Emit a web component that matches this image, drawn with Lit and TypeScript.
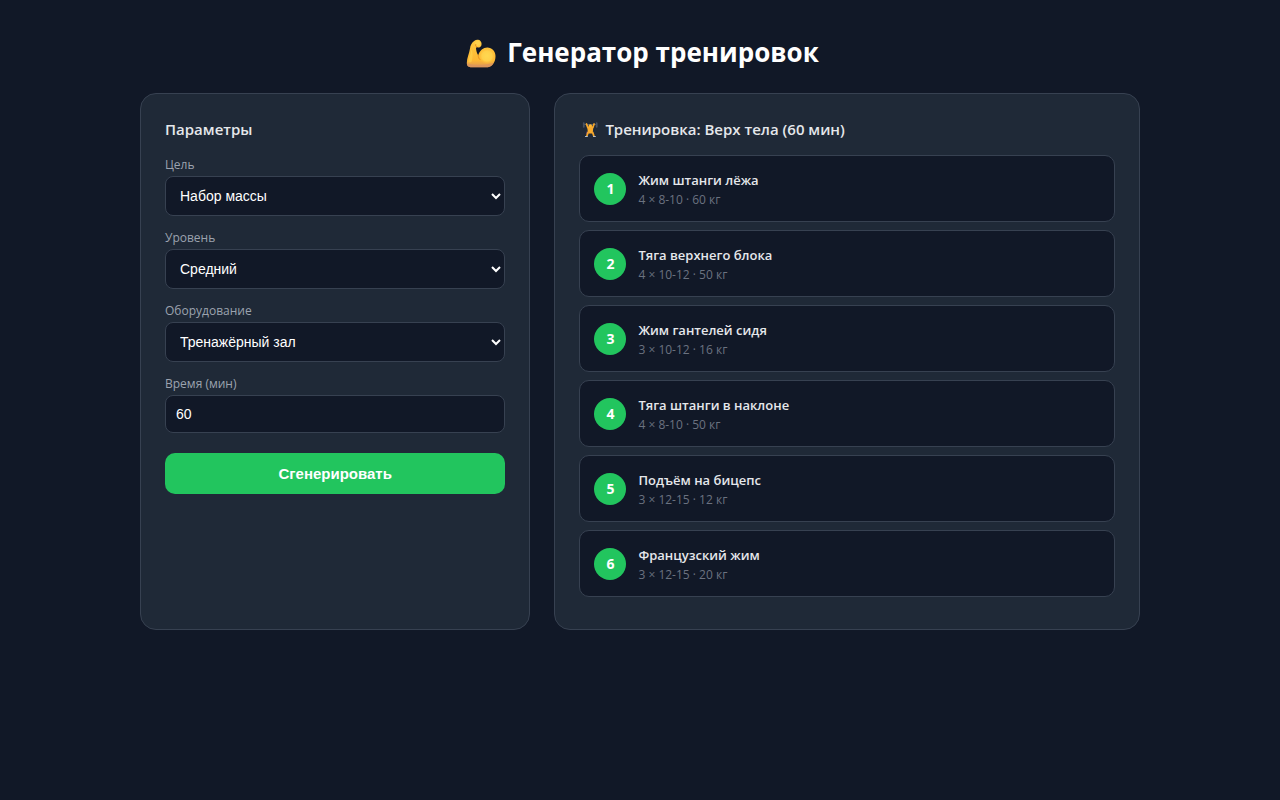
import { LitElement, html, css } from "lit";
import { customElement, state } from "lit/decorators.js";

interface Exercise {
  name: string;
  sets: number;
  reps: string;
  weight: number;
}

const EXERCISES: Exercise[] = [
  { name: "Жим штанги лёжа", sets: 4, reps: "8-10", weight: 60 },
  { name: "Тяга верхнего блока", sets: 4, reps: "10-12", weight: 50 },
  { name: "Жим гантелей сидя", sets: 3, reps: "10-12", weight: 16 },
  { name: "Тяга штанги в наклоне", sets: 4, reps: "8-10", weight: 50 },
  { name: "Подъём на бицепс", sets: 3, reps: "12-15", weight: 12 },
  { name: "Французский жим", sets: 3, reps: "12-15", weight: 20 },
];

@customElement("app-root")
export class AppRoot extends LitElement {
  @state() private minutes = 60;

  static styles = css`
    :host {
      display: block;
      box-sizing: border-box;
      min-height: 100vh;
      padding: 32px;
      background: #111827;
      color: #e5e7eb;
      font-family: "Open Sans", "Noto Sans", sans-serif;
    }
    * {
      box-sizing: border-box;
    }
    .page {
      max-width: 1000px;
      margin: 0 auto;
    }
    .title {
      display: flex;
      justify-content: center;
      align-items: center;
      gap: 8px;
      margin: 0 0 20px;
      font-size: 26px;
      line-height: 41px;
      font-weight: 700;
      color: #fff;
    }
    .arm {
      width: 38px;
      height: 32px;
      flex: none;
    }
    .columns {
      display: grid;
      grid-template-columns: 1fr 1.5fr;
      gap: 24px;
    }
    .card {
      padding: 24px;
      background: #1f2937;
      border: 1px solid #374151;
      border-radius: 16px;
    }
    .heading {
      display: flex;
      align-items: center;
      gap: 4px;
      margin: 0 0 14px;
      font-size: 15px;
      line-height: 23px;
      font-weight: 600;
    }
    .lifter {
      width: 22px;
      height: 18px;
      flex: none;
    }
    .label {
      display: block;
      margin-bottom: 2px;
      font-size: 12px;
      line-height: 19px;
      color: #9ca3af;
    }
    .field {
      display: block;
      width: 100%;
      height: 40px;
      margin: 0 0 12px;
      padding: 10px;
      background: #111827;
      border: 1px solid #374151;
      border-radius: 8px;
      color: #fff;
      font-family: "Liberation Sans", Arial, sans-serif;
      font-size: 14px;
    }
    .number {
      height: 38px;
    }
    .submit {
      display: block;
      width: 100%;
      margin: 20px 0 0;
      padding: 12px;
      border: 0;
      border-radius: 10px;
      background: #22c55e;
      color: #fff;
      font-family: "Liberation Sans", Arial, sans-serif;
      font-size: 15px;
      line-height: 17px;
      font-weight: 700;
      cursor: pointer;
    }
    .list {
      margin: 0;
      padding: 0;
      list-style: none;
    }
    .item {
      display: flex;
      align-items: center;
      gap: 12px;
      margin-bottom: 8px;
      padding: 13px 14px;
      background: #111827;
      border: 1px solid #374151;
      border-radius: 10px;
    }
    .badge {
      display: flex;
      align-items: center;
      justify-content: center;
      flex: none;
      width: 32px;
      height: 32px;
      border-radius: 50%;
      background: #22c55e;
      color: #fff;
      font-size: 14px;
      font-weight: 700;
    }
    .name {
      font-size: 13px;
      line-height: 23px;
      font-weight: 600;
    }
    .meta {
      font-size: 12px;
      line-height: 16px;
      color: #6b7280;
    }
  `;

  private onMinutes(e: Event) {
    this.minutes = Number((e.target as HTMLInputElement).value);
  }

  render() {
    return html`
      <main class="page">
        <h1 class="title">
          <svg class="arm" viewBox="-1 1 38 32" aria-hidden="true">
            <defs>
              <linearGradient id="skin" x1="0" y1="0" x2="0" y2="1">
                <stop offset="0" stop-color="#ffcb40" />
                <stop offset="0.75" stop-color="#fdb833" />
                <stop offset="1" stop-color="#dd9758" />
              </linearGradient>
              <radialGradient id="muscle">
                <stop offset="0" stop-color="#ffd850" />
                <stop offset="0.6" stop-color="#ffd04a" />
                <stop offset="1" stop-color="#fdb833" stop-opacity="0" />
              </radialGradient>
            </defs>
            <path fill="url(#skin)" d="M12.500 4.700C14 3.500 17 3.500 18.400 4.900c1.500 1.500 1.500 4 .5 5.300-1 1.300-2.700 1.600-4 .9l-.9.900c.1 3 1 5.300 2.200 7.200 1.500-4.700 5.100-7.700 9.100-7.700 4.700 0 8.200 3.800 8.200 8.600 0 6-3 10.500-7.500 11.100H8.500C6 31 4.800 29.500 4.800 27c.1-5.500 2.400-9 3.200-14.500.3-3 1.700-6 4.500-7.800z" />
            <ellipse cx="25" cy="20" rx="8.500" ry="8.300" fill="url(#muscle)" />
            <circle cx="15.700" cy="7.300" r="2.500" fill="#ffd650" opacity=".8" />
            <path fill="#ffd650" opacity=".6" d="M9.500 13.500c1.500 3 1.500 8 0 12.500-1.500.8-2.800.4-3-.5.600-4 2.300-7.500 3-12z" />
            <path fill="none" stroke="#e8921e" stroke-width="1" stroke-linecap="round" d="M16.200 19.200c0 2 .6 3.400 1.800 4.400M14.900 11.100c-1.200-.5-1.600-1.600-1.200-2.600" />
            <path fill="#d9935c" opacity=".8" d="M4.900 27.500c6 1.700 17 2 26.600-.5-1.200 2.500-3 3.800-5.700 4.200H8.500C6.200 31 5 29.800 4.900 27.500z" />
          </svg>
          <span>Генератор тренировок</span>
        </h1>
        <div class="columns">
          <section class="card">
            <h2 class="heading">Параметры</h2>
            <label class="label" for="goal">Цель</label>
            <select class="field" id="goal">
              <option>Набор массы</option>
              <option>Похудение</option>
              <option>Выносливость</option>
            </select>
            <label class="label" for="level">Уровень</label>
            <select class="field" id="level">
              <option>Начинающий</option>
              <option selected>Средний</option>
              <option>Продвинутый</option>
            </select>
            <label class="label" for="gear">Оборудование</label>
            <select class="field" id="gear">
              <option>Тренажёрный зал</option>
              <option>Гантели</option>
              <option>Без оборудования</option>
            </select>
            <label class="label" for="time">Время (мин)</label>
            <input class="field number" id="time" type="number" .value=${String(this.minutes)} @change=${this.onMinutes} />
            <button class="submit" type="button">Сгенерировать</button>
          </section>
          <section class="card">
            <h2 class="heading">
              <svg class="lifter" viewBox="0 0 22 18" aria-hidden="true">
                <path stroke="#5b6472" stroke-width=".8" d="M5 3.500h13" />
                <path stroke="#465162" stroke-width="1.800" stroke-linecap="round" d="M4.800 2.200v3.600M17.700 2.200v3.600" />
                <path fill="none" stroke="#f5a62c" stroke-width="1.800" stroke-linecap="round" stroke-linejoin="round" d="M7.500 3l1.300 3.500h5l1.300-3.500" />
                <circle cx="11.300" cy="5" r="1.800" fill="#fdb934" />
                <path fill="#f8ab2e" d="M8.300 6h6l-.6 6.500h-4.800z" />
                <path fill="#7d4a86" d="M7.600 10.500l1.800.8-.6 2-1.600-.4z" />
                <path fill="none" stroke="#f5a62c" stroke-width="1.800" stroke-linecap="round" d="M9 11.500l-1 3M13.700 11.500l1 3" />
                <path stroke="#b9c0cc" stroke-width="1.200" stroke-linecap="round" d="M6.500 15.500h1.800M14.500 15.500h1.800" />
              </svg>
              <span>Тренировка: Верх тела (${this.minutes} мин)</span>
            </h2>
            <ol class="list">
              ${EXERCISES.map(
                (ex, i) => html`
                  <li class="item">
                    <span class="badge">${i + 1}</span>
                    <div>
                      <div class="name">${ex.name}</div>
                      <div class="meta">${ex.sets} × ${ex.reps} · ${ex.weight} кг</div>
                    </div>
                  </li>
                `
              )}
            </ol>
          </section>
        </div>
      </main>
    `;
  }
}
